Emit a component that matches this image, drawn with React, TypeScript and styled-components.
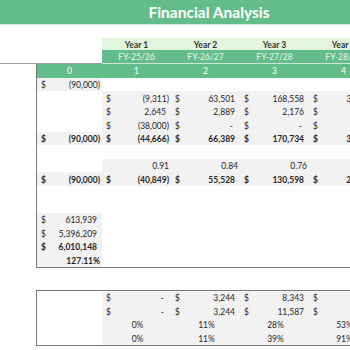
import React from 'react';
import styled, { createGlobalStyle } from 'styled-components';

type Kind = 'acct' | 'num' | 'pct';

type CellData = {
  kind: Kind;
  value: string;
};

type RowData = {
  bold?: boolean;
  shade?: [number, number];
  cells: (CellData | null)[];
};

const acct = (value: string): CellData => ({ kind: 'acct', value });
const num = (value: string): CellData => ({ kind: 'num', value });
const pct = (value: string): CellData => ({ kind: 'pct', value });

const years = ['Year 1', 'Year 2', 'Year 3', 'Year 4', 'Year 5'];
const fiscal = ['FY-25/26', 'FY-26/27', 'FY-27/28', 'FY-28/29', 'FY-29/30'];

const mainRows: RowData[] = [
  { shade: [0, 0], cells: [acct('(90,000)')] },
  { shade: [1, 5], cells: [null, acct('(9,311)'), acct('63,501'), acct('168,558'), acct('37,457'), acct('401,230')] },
  { shade: [1, 5], cells: [null, acct('2,645'), acct('2,889'), acct('2,176'), acct('1,958'), acct('1,702')] },
  { shade: [1, 5], cells: [null, acct('(38,000)'), acct('-'), acct('-'), acct('-'), acct('-')] },
  { bold: true, shade: [0, 5], cells: [acct('(90,000)'), acct('(44,666)'), acct('66,389'), acct('170,734'), acct('39,415'), acct('402,932')] },
  { cells: [] },
  { shade: [1, 5], cells: [null, num('0.91'), num('0.84'), num('0.76'), num('0.69'), num('0.63')] },
  { bold: true, shade: [0, 5], cells: [acct('(90,000)'), acct('(40,849)'), acct('55,528'), acct('130,598'), acct('27,946'), acct('253,844')] },
  { cells: [] },
  { cells: [] },
  { shade: [0, 0], cells: [acct('613,939')] },
  { shade: [0, 0], cells: [acct('5,396,209')] },
  { bold: true, shade: [0, 0], cells: [acct('6,010,148')] },
  { bold: true, shade: [0, 0], cells: [num('127.11%')] },
];

const paybackRows: RowData[] = [
  { shade: [1, 5], cells: [null, acct('-'), acct('3,244'), acct('8,343'), acct('9,812'), acct('10,406')] },
  { shade: [1, 5], cells: [null, acct('-'), acct('3,244'), acct('11,587'), acct('1,399'), acct('31,805')] },
  { shade: [1, 5], cells: [null, pct('0%'), pct('11%'), pct('28%'), pct('53%'), pct('78%')] },
  { shade: [1, 5], cells: [null, pct('0%'), pct('11%'), pct('39%'), pct('91%'), pct('169%')] },
];

const GlobalStyle = createGlobalStyle`
  body {
    margin: 0;
    background: #ffffff;
    overflow: hidden;
    font-family: Lato, "Liberation Sans", sans-serif;
    color: #262626;
  }
`;

const Sheet = styled.div`
  width: 447px;
`;

const TitleBar = styled.div`
  width: 418px;
  height: 24px;
  background: #63bd8b;
  border-bottom: 1px solid #d4ecdd;
  display: flex;
  align-items: center;
  justify-content: center;
  color: #ffffff;
  font-weight: 700;
  font-size: 15.5px;
`;

const HeaderGrid = styled.div`
  margin-top: 13px;
  display: grid;
  grid-template-columns: 102px repeat(5, 69px);
  grid-template-rows: 12px 14px;
`;

const Blank = styled.div<{ $rule?: boolean }>`
  border-bottom: ${(p) => (p.$rule ? '1px solid #9c9c9c' : 'none')};
`;

const YearCell = styled.div`
  background: #e2f5dd;
  display: flex;
  align-items: flex-end;
  justify-content: center;
  font-size: 8.5px;
  font-weight: 700;
  color: #333333;
  line-height: 10px;
`;

const FyCell = styled.div`
  background: #63bd8b;
  border-bottom: 1px solid #cfe4d6;
  display: flex;
  align-items: center;
  justify-content: center;
  font-size: 8.5px;
  color: #eaf6ee;
`;

const Table = styled.div<{ $top?: boolean }>`
  margin-left: 36px;
  display: grid;
  grid-template-columns: 65px repeat(5, 69px);
  grid-auto-rows: 13.5px;
  border-left: 1px solid #7a7a7a;
  border-bottom: 1px solid #7a7a7a;
  border-top: ${(p) => (p.$top ? '1px solid #7a7a7a' : 'none')};
`;

const IndexCell = styled.div`
  height: 14px;
  background: #63bd8b;
  display: flex;
  align-items: center;
  justify-content: center;
  font-size: 8.5px;
  color: #ffffff;
`;

const Cell = styled.div<{ $shade?: boolean; $bold?: boolean; $kind?: Kind }>`
  background: ${(p) => (p.$shade ? '#f2f2f2' : '#ffffff')};
  font-weight: ${(p) => (p.$bold ? 700 : 400)};
  font-size: 8.5px;
  line-height: 9px;
  display: flex;
  align-items: flex-end;
  padding: 0 2px 1px 4px;
  justify-content: ${(p) =>
    p.$kind === 'pct' ? 'center' : p.$kind === 'num' ? 'flex-end' : 'space-between'};
`;

const Amount = styled.span<{ $pad: number }>`
  padding-right: ${(p) => p.$pad}px;
`;

const Gap = styled.div`
  height: 22px;
`;

const amountPad = (v: string) => (v.startsWith('(') ? 0 : v === '-' ? 5 : 3);

const Row = ({ row }: { row: RowData }) => {
  const cols = [0, 1, 2, 3, 4, 5];
  return (
    <>
      {cols.map((i) => {
        const c = row.cells[i];
        const shaded = !!row.shade && i >= row.shade[0] && i <= row.shade[1];
        return (
          <Cell key={i} $shade={shaded} $bold={row.bold} $kind={c?.kind}>
            {c && c.kind === 'acct' && (
              <>
                <span>$</span>
                <Amount $pad={amountPad(c.value)}>{c.value}</Amount>
              </>
            )}
            {c && c.kind !== 'acct' && <span>{c.value}</span>}
          </Cell>
        );
      })}
    </>
  );
};

const App = () => {
  return (
    <Sheet>
      <GlobalStyle />
      <TitleBar>Financial Analysis</TitleBar>
      <HeaderGrid>
        <Blank />
        {years.map((y) => (
          <YearCell key={y}>{y}</YearCell>
        ))}
        <Blank $rule />
        {fiscal.map((f) => (
          <FyCell key={f}>{f}</FyCell>
        ))}
      </HeaderGrid>
      <Table>
        {[0, 1, 2, 3, 4, 5].map((n) => (
          <IndexCell key={n}>{n}</IndexCell>
        ))}
        {mainRows.map((r, i) => (
          <Row key={i} row={r} />
        ))}
      </Table>
      <Gap />
      <Table $top>
        {paybackRows.map((r, i) => (
          <Row key={i} row={r} />
        ))}
      </Table>
    </Sheet>
  );
};

export default App;
